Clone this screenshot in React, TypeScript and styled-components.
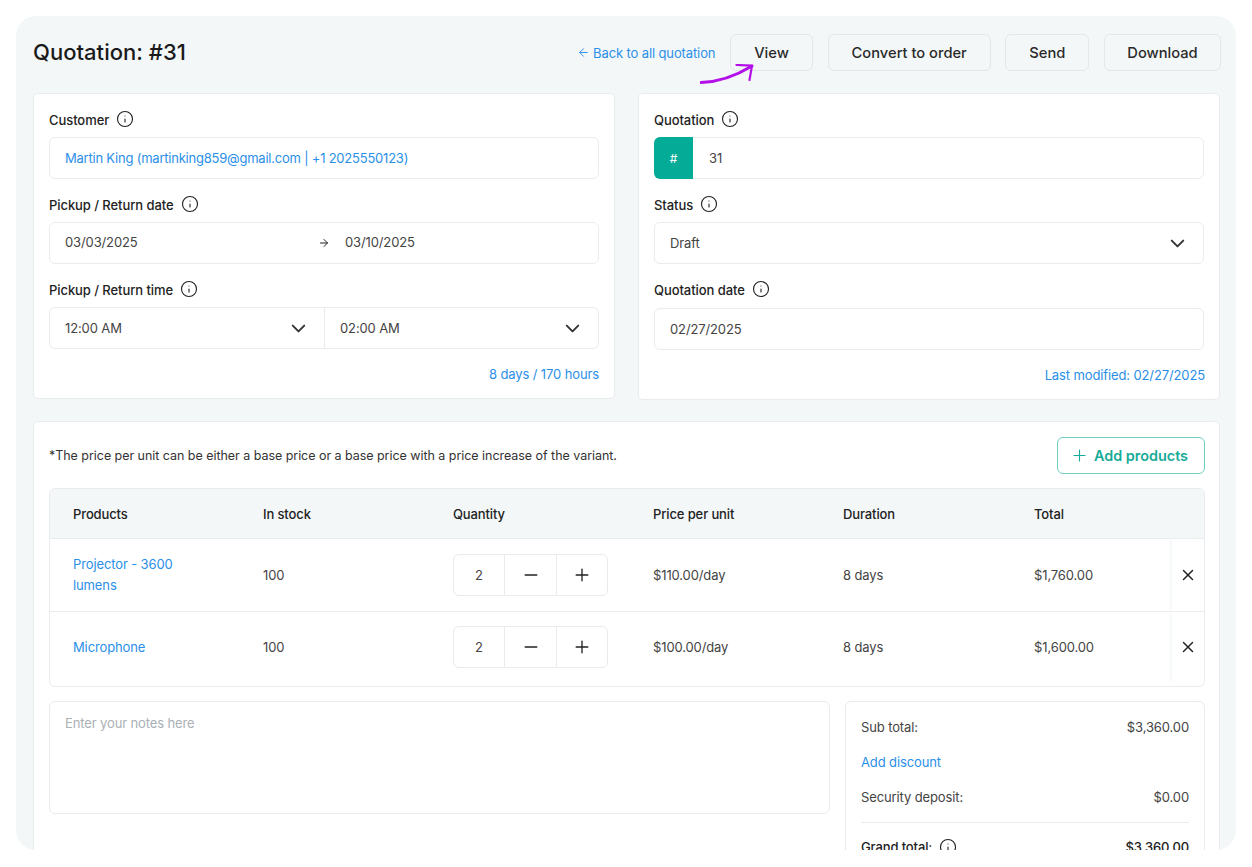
import React from "react";
import styled, { createGlobalStyle } from "styled-components";
import { ArrowLeft, ArrowRight, ChevronDown, Info, Minus, Plus, X } from "lucide-react";

const GlobalStyle = createGlobalStyle`
  html, body {
    margin: 0;
    padding: 0;
    background: #fff;
    height: 867px;
    overflow: hidden;
  }
  * {
    box-sizing: border-box;
  }
  body {
    font-family: Inter, "Noto Sans", sans-serif;
    font-size: 13px;
    letter-spacing: -0.12px;
    color: #444;
  }
`;

const products = [
  { name: "Projector - 3600 lumens", stock: "100", qty: "2", price: "$110.00/day", duration: "8 days", total: "$1,760.00" },
  { name: "Microphone", stock: "100", qty: "2", price: "$100.00/day", duration: "8 days", total: "$1,600.00" },
];

export default function App() {
  return (
    <>
      <GlobalStyle />
      <Page>
        <Panel>
          <Header>
            <Title>Quotation: #31</Title>
            <Actions>
              <BackLink>
                <ArrowLeft size={13} strokeWidth={1.75} />
                Back to all quotation
              </BackLink>
              <HeadButton $width={83}>
                View
                <Pointer width="56" height="22" viewBox="0 0 56 22" fill="none">
                  <path
                    d="M1 18.5C18 18 34 13 52 2"
                    stroke="#b30fe8"
                    strokeWidth="3"
                    strokeLinecap="round"
                  />
                  <path
                    d="M36.5 1L52 1.6L49.5 16"
                    stroke="#b30fe8"
                    strokeWidth="2.2"
                    strokeLinecap="round"
                    strokeLinejoin="round"
                  />
                </Pointer>
              </HeadButton>
              <HeadButton $width={163}>Convert to order</HeadButton>
              <HeadButton $width={84}>Send</HeadButton>
              <HeadButton $width={117}>Download</HeadButton>
            </Actions>
          </Header>

          <TopGrid>
            <Card $height={306}>
              <Field>
                <Label>
                  Customer
                  <Info size={18} strokeWidth={1.5} />
                </Label>
                <InputBox>
                  <CustomerLink>Martin King (martinking859@gmail.com | +1 2025550123)</CustomerLink>
                </InputBox>
              </Field>
              <Field>
                <Label>
                  Pickup / Return date
                  <Info size={18} strokeWidth={1.5} />
                </Label>
                <InputBox>
                  <DateHalf>03/03/2025</DateHalf>
                  <ArrowRight size={12} strokeWidth={2} color="#222" />
                  <DateEnd>03/10/2025</DateEnd>
                </InputBox>
              </Field>
              <Field>
                <Label>
                  Pickup / Return time
                  <Info size={18} strokeWidth={1.5} />
                </Label>
                <SplitBox>
                  <SplitCell>
                    12:00 AM
                    <ChevronDown size={23} strokeWidth={2} color="#333" />
                  </SplitCell>
                  <SplitCell>
                    02:00 AM
                    <ChevronDown size={23} strokeWidth={2} color="#333" />
                  </SplitCell>
                </SplitBox>
              </Field>
              <Note>8 days / 170 hours</Note>
            </Card>

            <Card $height={307}>
              <Field>
                <Label>
                  Quotation
                  <Info size={18} strokeWidth={1.5} />
                </Label>
                <AddonBox>
                  <Addon>#</Addon>
                  <AddonValue>31</AddonValue>
                </AddonBox>
              </Field>
              <Field>
                <Label>
                  Status
                  <Info size={18} strokeWidth={1.5} />
                </Label>
                <InputBox $between>
                  Draft
                  <ChevronDown size={23} strokeWidth={2} color="#333" />
                </InputBox>
              </Field>
              <Field>
                <Label $gap={9}>
                  Quotation date
                  <Info size={18} strokeWidth={1.5} />
                </Label>
                <InputBox>02/27/2025</InputBox>
              </Field>
              <Note $nudge={-1}>Last modified: 02/27/2025</Note>
            </Card>
          </TopGrid>

          <ProductsCard>
            <ProductsTop>
              <Hint>*The price per unit can be either a base price or a base price with a price increase of the variant.</Hint>
              <AddButton>
                <Plus size={19} strokeWidth={1.4} />
                Add products
              </AddButton>
            </ProductsTop>

            <Table>
              <HeadRow>
                <span>Products</span>
                <span>In stock</span>
                <span>Quantity</span>
                <span>Price per unit</span>
                <span>Duration</span>
                <span>Total</span>
              </HeadRow>
              {products.map((p) => (
                <Row key={p.name}>
                  <ProductName>{p.name}</ProductName>
                  <span>{p.stock}</span>
                  <Stepper>
                    <StepCell>{p.qty}</StepCell>
                    <StepCell>
                      <Minus size={20} strokeWidth={1.6} color="#222" />
                    </StepCell>
                    <StepCell>
                      <Plus size={20} strokeWidth={1.6} color="#222" />
                    </StepCell>
                  </Stepper>
                  <span>{p.price}</span>
                  <span>{p.duration}</span>
                  <span>{p.total}</span>
                  <RemoveCell>
                    <X size={18} strokeWidth={2} color="#222" />
                  </RemoveCell>
                </Row>
              ))}
            </Table>

            <BottomGrid>
              <Notes>Enter your notes here</Notes>
              <Summary>
                <SummaryRow>
                  <span>Sub total:</span>
                  <span>$3,360.00</span>
                </SummaryRow>
                <SummaryRow>
                  <LinkText>Add discount</LinkText>
                </SummaryRow>
                <SummaryRow>
                  <span>Security deposit:</span>
                  <span>$0.00</span>
                </SummaryRow>
                <Divider />
                <GrandRow>
                  <GrandLabel>
                    Grand total:
                    <Info size={18} strokeWidth={1.5} />
                  </GrandLabel>
                  <span>$3,360.00</span>
                </GrandRow>
              </Summary>
            </BottomGrid>
          </ProductsCard>
        </Panel>
      </Page>
    </>
  );
}

const Page = styled.div`
  padding: 16px 16px 0;
  height: 867px;
  overflow: hidden;
`;

const Panel = styled.div`
  height: 834px;
  overflow: hidden;
  background: #f4f7f8;
  border-radius: 20px;
  padding: 0 16px 0 17px;
`;

const Header = styled.div`
  height: 77px;
  display: flex;
  align-items: center;
  justify-content: space-between;
  margin-right: -1px;
  padding-bottom: 4px;
`;

const Title = styled.h1`
  margin: 0 0 2px;
  font-size: 22px;
  font-weight: 500;
  letter-spacing: 0.02px;
  color: #1a1a1a;
`;

const Actions = styled.div`
  display: flex;
  align-items: center;
  gap: 14.67px;
`;

const BackLink = styled.a`
  display: flex;
  align-items: center;
  gap: 3px;
  color: #2b8fe8;
  font-size: 13px;
`;

const HeadButton = styled.button<{ $width: number }>`
  position: relative;
  width: ${(p) => p.$width}px;
  height: 37px;
  background: #f4f7f8;
  border: 1px solid #e3e7ea;
  border-radius: 6px;
  color: #2a2a2a;
  font-family: inherit;
  font-size: 14.7px;
  font-weight: 500;
  letter-spacing: 0;
  padding: 0;
`;

const Pointer = styled.svg`
  position: absolute;
  left: -31px;
  top: 29px;
`;

const TopGrid = styled.div`
  display: grid;
  grid-template-columns: 582px 582px;
  gap: 23px;
  align-items: start;
  height: 307px;
`;

const Card = styled.div<{ $height: number }>`
  background: #fff;
  border: 1px solid #e8ecee;
  border-radius: 5px;
  padding: 15px 15px 0;
  height: ${(p) => p.$height}px;
`;

const Field = styled.div`
  margin-bottom: 15px;
`;

const Label = styled.div<{ $gap?: number }>`
  display: flex;
  align-items: center;
  gap: 7px;
  height: 20px;
  padding-top: 2px;
  margin-bottom: ${(p) => p.$gap ?? 8}px;
  color: #222;
  font-size: 13px;
  font-weight: 500;
  letter-spacing: -0.07px;
  svg {
    margin-top: -2px;
  }
`;

const InputBox = styled.div<{ $between?: boolean }>`
  display: flex;
  align-items: center;
  justify-content: ${(p) => (p.$between ? "space-between" : "flex-start")};
  height: 42px;
  padding: 0 14px 0 15px;
  border: 1px solid #e8ecee;
  border-radius: 6px;
  background: #fff;
  color: #444;
`;

const LinkText = styled.span`
  color: #2b8fe8;
`;

const CustomerLink = styled(LinkText)`
  letter-spacing: -0.22px;
`;

const DateHalf = styled.span`
  width: 253px;
  margin-bottom: 2px;
`;

const DateEnd = styled.span`
  margin-left: 15px;
  margin-bottom: 2px;
`;

const SplitBox = styled.div`
  display: grid;
  grid-template-columns: 1fr 1fr;
  height: 42px;
  border: 1px solid #e8ecee;
  border-radius: 6px;
`;

const SplitCell = styled.div`
  display: flex;
  align-items: center;
  justify-content: space-between;
  padding: 0 14px 0 15px;
  & + & {
    border-left: 1px solid #e8ecee;
  }
`;

const Note = styled.div<{ $nudge?: number }>`
  padding-top: 2px;
  margin-right: ${(p) => p.$nudge ?? 0}px;
  text-align: right;
  color: #2b8fe8;
`;

const AddonBox = styled.div`
  display: flex;
  align-items: stretch;
  height: 42px;
  border: 1px solid #e8ecee;
  border-radius: 6px;
`;

const Addon = styled.div`
  width: 39px;
  margin: -1px 0 -1px -1px;
  display: flex;
  align-items: center;
  justify-content: center;
  background: #04ac97;
  border-radius: 6px 0 0 6px;
  color: #fff;
  font-size: 12px;
`;

const AddonValue = styled.div`
  display: flex;
  align-items: center;
  padding-left: 16px;
`;

const ProductsCard = styled.div`
  margin-top: 21px;
  background: #fff;
  border: 1px solid #e8ecee;
  border-radius: 5px;
  padding: 15px 14px 40px 15px;
`;

const ProductsTop = styled.div`
  display: flex;
  align-items: center;
  justify-content: space-between;
  height: 37px;
  margin-bottom: 14px;
`;

const Hint = styled.span`
  color: #333;
  font-size: 12.5px;
  letter-spacing: -0.04px;
`;

const AddButton = styled.button`
  display: flex;
  align-items: center;
  justify-content: flex-start;
  gap: 5.5px;
  width: 148px;
  height: 37px;
  background: #fff;
  border: 1px solid #6fcfc2;
  border-radius: 6px;
  color: #17ab98;
  font-family: inherit;
  font-size: 14.4px;
  font-weight: 600;
  letter-spacing: 0;
  padding: 0 0 0 11.5px;
`;

const Table = styled.div`
  border: 1px solid #e8ecee;
  border-radius: 6px;
  overflow: hidden;
  padding-bottom: 4px;
`;

const columns = "190px 190px 200px 190px 191px 1fr 32px";

const HeadRow = styled.div`
  display: grid;
  grid-template-columns: ${columns};
  align-items: center;
  height: 50px;
  padding-left: 23px;
  background: #f4f7f8;
  border-bottom: 1px solid #e8ecee;
  color: #222;
  font-weight: 500;
`;

const Row = styled.div`
  display: grid;
  grid-template-columns: ${columns};
  align-items: center;
  height: 72px;
  padding-left: 23px;
  & + & {
    height: 71px;
    border-top: 1px solid #e8ecee;
  }
`;

const ProductName = styled.span`
  width: 120px;
  color: #2b8fe8;
  line-height: 21px;
`;

const Stepper = styled.div`
  display: grid;
  grid-template-columns: 50px 52px 1fr;
  width: 155px;
  height: 42px;
  border: 1px solid #e8ecee;
  border-radius: 6px;
`;

const StepCell = styled.div`
  display: flex;
  align-items: center;
  justify-content: center;
  & + & {
    border-left: 1px solid #e8ecee;
  }
`;

const RemoveCell = styled.div`
  display: flex;
  align-items: center;
  justify-content: center;
  align-self: stretch;
  box-shadow: -3px 0 3px -1px #f4f6f7;
`;

const BottomGrid = styled.div`
  display: grid;
  grid-template-columns: 781px 360px;
  gap: 15px;
  margin-top: 14px;
  align-items: start;
`;

const Notes = styled.div`
  height: 113px;
  padding: 13px 15px;
  border: 1px solid #e8ecee;
  border-radius: 6px;
  color: #aab0b6;
`;

const Summary = styled.div`
  padding: 7px 15px 16px;
  border: 1px solid #e8ecee;
  border-radius: 6px;
`;

const SummaryRow = styled.div`
  display: flex;
  align-items: center;
  justify-content: space-between;
  height: 35px;
`;

const Divider = styled.div`
  height: 1px;
  background: #e8ecee;
  margin: 8px 0 14px;
`;

const GrandRow = styled.div`
  display: flex;
  align-items: center;
  justify-content: space-between;
  height: 20px;
  font-weight: 500;
  color: #222;
`;

const GrandLabel = styled.span`
  display: flex;
  align-items: center;
  gap: 7px;
`;
